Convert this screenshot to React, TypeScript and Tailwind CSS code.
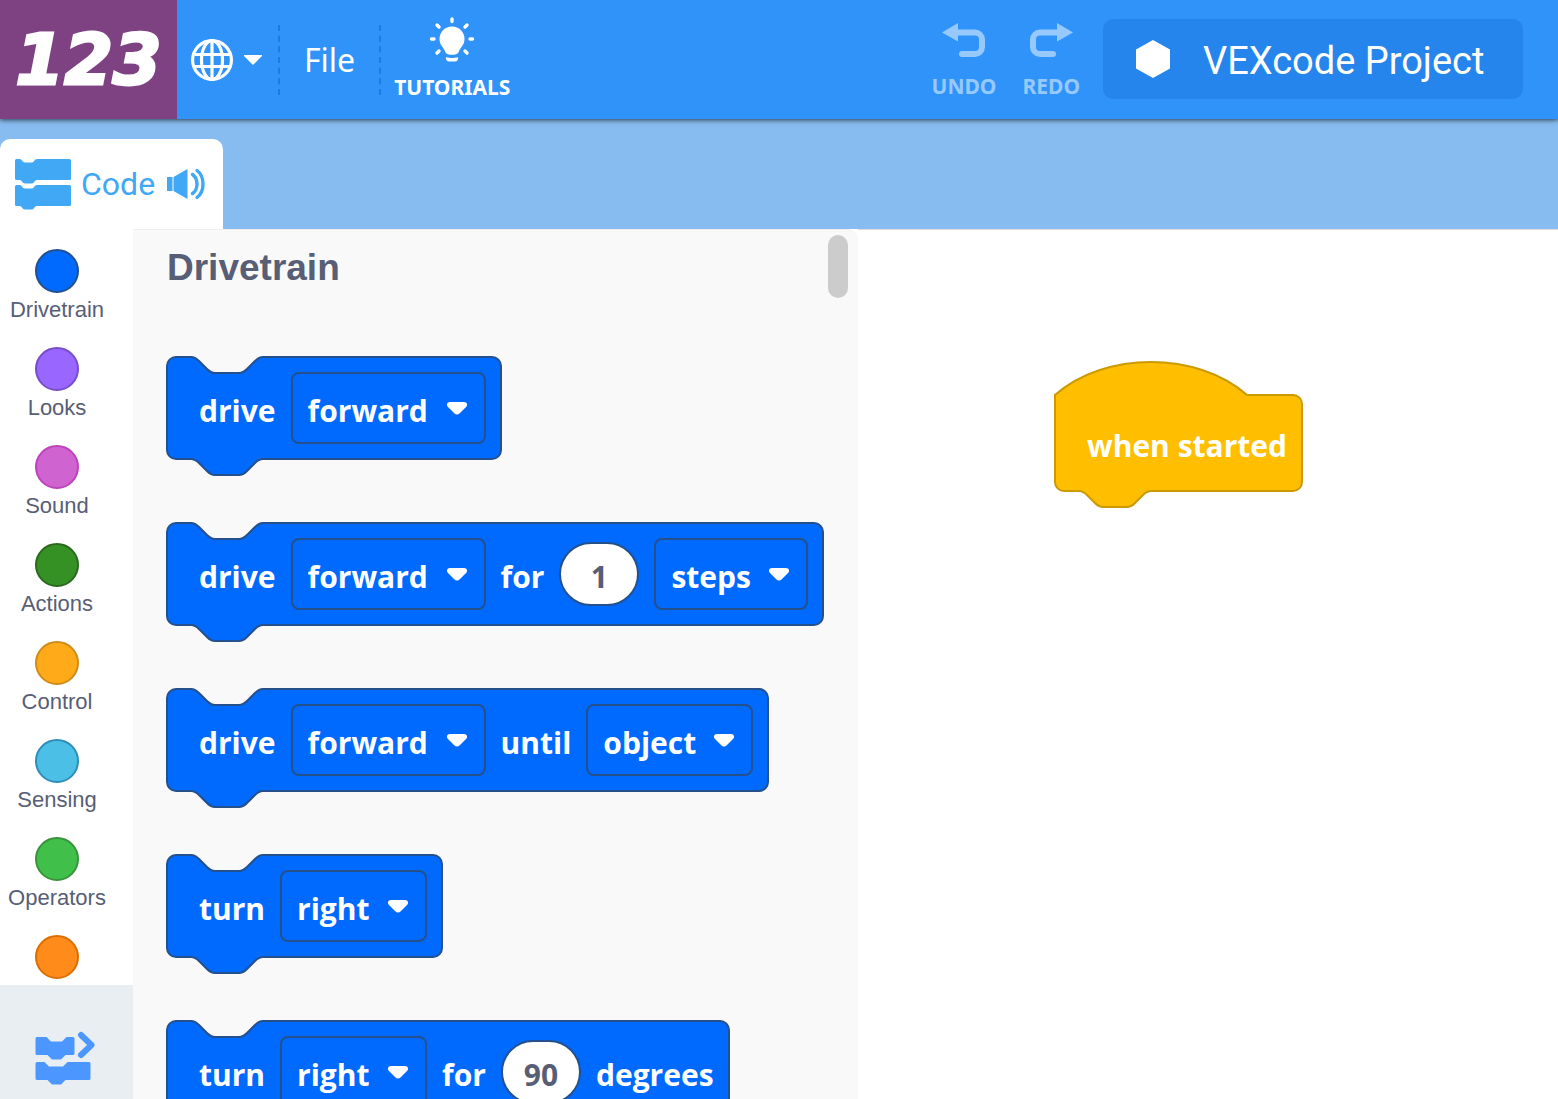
import { useState } from "react";

interface Category {
  name: string;
  fill: string;
}

type Part =
  | { kind: "label"; text: string }
  | { kind: "menu"; text: string }
  | { kind: "number"; value: string };

const categories: Category[] = [
  { name: "Drivetrain", fill: "bg-[#006aff] border-[#24508c]" },
  { name: "Looks", fill: "bg-[#9966ff] border-[#774dcb]" },
  { name: "Sound", fill: "bg-[#cf63cf] border-[#bd42bd]" },
  { name: "Actions", fill: "bg-[#369125] border-[#29681d]" },
  { name: "Control", fill: "bg-[#ffab19] border-[#cf8b17]" },
  { name: "Sensing", fill: "bg-[#4cbfe6] border-[#2e8eb8]" },
  { name: "Operators", fill: "bg-[#40bf4a] border-[#389438]" },
  { name: "", fill: "bg-[#ff8c1a] border-[#db6e00]" },
];

const blocks: Part[][] = [
  [
    { kind: "label", text: "drive" },
    { kind: "menu", text: "forward" },
  ],
  [
    { kind: "label", text: "drive" },
    { kind: "menu", text: "forward" },
    { kind: "label", text: "for" },
    { kind: "number", value: "1" },
    { kind: "menu", text: "steps" },
  ],
  [
    { kind: "label", text: "drive" },
    { kind: "menu", text: "forward" },
    { kind: "label", text: "until" },
    { kind: "menu", text: "object" },
  ],
  [
    { kind: "label", text: "turn" },
    { kind: "menu", text: "right" },
  ],
  [
    { kind: "label", text: "turn" },
    { kind: "menu", text: "right" },
    { kind: "label", text: "for" },
    { kind: "number", value: "90" },
    { kind: "label", text: "degrees" },
  ],
];

const CONNECTOR = "M0 1c4 0 6 2 8 4l8 8c2 2 4 4 8 4h24c4 0 6-2 8-4l8-8c2-2 4-4 8-4";

// Bump that joins two blocks, used for the notch on top and the tab below
function Connector({ fill, stroke, className }: { fill: string; stroke: string; className: string }) {
  return (
    <svg className={`absolute left-[23px] ${className}`} width="72" height="18" viewBox="0 0 72 18">
      <path d={`${CONNECTOR}V0H0z`} fill={fill} />
      <path d={CONNECTOR} fill="none" stroke={stroke} strokeWidth="2" />
    </svg>
  );
}

function BlockPart({ part }: { part: Part }) {
  if (part.kind === "label") {
    return <span className="pt-1">{part.text}</span>;
  }

  if (part.kind === "number") {
    return (
      <input
        type="text"
        aria-label="Amount"
        defaultValue={part.value}
        className="h-16 w-20 rounded-[32px] border-2 border-[#24508c] bg-white pt-1 text-center text-[#575e75]"
      />
    );
  }

  return (
    <div className="relative">
      <select
        aria-label={part.text}
        className="block h-[72px] appearance-none rounded-lg border-2 border-[#24508c] bg-transparent pt-1 pr-[55px] pl-[15px]"
      >
        <option>{part.text}</option>
      </select>
      <svg
        className="pointer-events-none absolute top-[30px] right-[18px]"
        width="22"
        height="14"
        viewBox="0 0 22 14"
      >
        <path d="M4 0h14c3 0 4 3 2 5l-6 6c-2 2-4 2-6 0L2 5C0 3 1 0 4 0z" fill="#fff" />
      </svg>
    </div>
  );
}

function Block({ parts }: { parts: Part[] }) {
  return (
    <div className="relative flex h-[104px] w-fit shrink-0 items-center gap-[15px] rounded-[10px] border-2 border-[#24508c] bg-[#006aff] pr-[14px] pl-[31px] font-['Open_Sans',sans-serif] text-[30px] font-bold whitespace-nowrap text-white">
      <Connector fill="#f9f9f9" stroke="#24508c" className="-top-[2px]" />
      <Connector fill="#006aff" stroke="#24508c" className="-bottom-[18px]" />
      {parts.map((part, i) => (
        <BlockPart key={i} part={part} />
      ))}
    </div>
  );
}

function HatBlock() {
  return (
    <div className="relative flex h-[98px] w-fit items-center rounded-[10px] rounded-tl-none border-2 border-[#cc9900] bg-[#ffbf00] pr-[14px] pl-[31px] font-['Open_Sans',sans-serif] text-[30px] font-bold whitespace-nowrap text-white">
      <svg className="absolute -top-[35px] -left-[2px]" width="196" height="36" viewBox="0 0 196 36">
        <path d="M1 34C51-10 143-10 193 34l1 2H2v-1z" fill="#ffbf00" />
        <path d="M1 36v-2C51-10 143-10 193 34h3" fill="none" stroke="#cc9900" strokeWidth="2" />
      </svg>
      <Connector fill="#ffbf00" stroke="#cc9900" className="-bottom-[18px]" />
      <span className="pt-1">when started</span>
    </div>
  );
}

function GlobeIcon() {
  return (
    <svg width="42" height="42" viewBox="0 0 42 42" fill="none" stroke="#fff" strokeWidth="3.2">
      <circle cx="21" cy="21" r="19.4" />
      <ellipse cx="21" cy="21" rx="10.5" ry="19.4" />
      <path d="M21 1v40M4 15.500h34M4 27.500h34" />
    </svg>
  );
}

function BulbIcon() {
  return (
    <svg width="46" height="46" viewBox="0 0 46 46" fill="#fff">
      <path d="M23 9.500c-7 0-12.500 5.500-12.500 12.200 0 6 3.500 8.300 5 11.300.8 1.600.6 4.800 7.500 4.800s6.700-3.200 7.500-4.800c1.500-3 5-5.300 5-11.300C35.500 15 30 9.500 23 9.500z" />
      <path d="M17.500 40.200c3 1.100 8 1.100 11 0 .8 0 1 .8.500 1.800-.7 1.800-1.500 2.500-3 2.500h-6c-1.500 0-2.300-.7-3-2.500-.5-1-.3-1.800.5-1.800z" />
      <path
        d="M23 2v2.500M8 8l2 2M38 8l-2 2M2.500 22H5M41 22h2.500M8 36l2-2M38 36l-2-2"
        stroke="#fff"
        strokeWidth="3.4"
        strokeLinecap="round"
      />
    </svg>
  );
}

function UndoIcon({ flipped }: { flipped?: boolean }) {
  return (
    <svg width="44" height="36" viewBox="0 0 44 36" className={flipped ? "-scale-x-100" : ""}>
      <path d="M0 9.500L16 0v18.500z" fill="#fff" />
      <path
        d="M16 9.500H33a7 7 0 0 1 7 7V24a7 7 0 0 1-7 7H20"
        fill="none"
        stroke="#fff"
        strokeWidth="6"
        strokeLinecap="round"
      />
    </svg>
  );
}

function CodeIcon() {
  const piece =
    "M1.500 0H5c1.500 0 2.500 3.500 5 3.500h7C19 3.500 19.500 0 22 0h32.500Q56 0 56 1.500v18Q56 21 54.500 21H22c-2.500 0-3 3.500-5 3.500h-7C7.500 24.500 6.500 21 5 21H1.500Q0 21 0 19.500v-18Q0 0 1.500 0z";
  return (
    <svg width="56" height="51" viewBox="0 0 56 51" fill="#41a8f5">
      <path d={piece} />
      <path d={piece} transform="translate(0 26)" />
    </svg>
  );
}

function SpeakerIcon() {
  return (
    <svg width="38" height="32" viewBox="0 0 38 32" fill="#41a8f5">
      <path d="M0 9h5.500v14H0zM6.500 9L20.500 1v30L6.500 23z" />
      <path
        d="M25.500 6.500c6 4 6 15 0 19M30 2.500c8 6 8 21 0 27"
        fill="none"
        stroke="#41a8f5"
        strokeWidth="3.4"
        strokeLinecap="round"
      />
    </svg>
  );
}

function ToolboxIcon() {
  return (
    <svg width="60" height="54" viewBox="0 0 60 54" fill="#4c97ff">
      <path d="M2 6h9.500l4.500 4.500h11L31.500 6H38q1.500 0 1.500 1.500v15q0 1.500-1.500 1.500h-7.500L26 28.500h-9L12.500 24H2q-1.500 0-1.500-1.500v-15Q.5 6 2 6z" />
      <path d="M2 31h7.500l4.500 4.500h14l4.500-4.500H54q1.500 0 1.500 1.500v15q0 1.500-1.500 1.500H30.500L26 53.500h-9L12.500 49H2q-1.500 0-1.500-1.500v-15Q.5 31 2 31z" />
      <path
        d="M46 4L56.500 14 46 24"
        fill="none"
        stroke="#4c97ff"
        strokeWidth="6"
        strokeLinecap="round"
        strokeLinejoin="round"
      />
    </svg>
  );
}

export default function App() {
  const [selected, setSelected] = useState("Drivetrain");

  return (
    <div className="flex h-screen flex-col overflow-hidden bg-white">
      {/* TOOLBAR */}
      <header className="relative z-10 flex h-[119px] shrink-0 items-center bg-[#2f93f9] text-white shadow-[0_1px_5px_rgba(0,0,0,0.7)]">
        <div className="flex h-full w-[177px] shrink-0 items-center justify-center bg-[#7e4283] font-['DejaVu_Sans',sans-serif] text-[70px] leading-none font-bold italic [-webkit-text-stroke:3px_white]">
          123
        </div>

        <button aria-label="Language" className="flex items-center gap-[11px] pr-4 pl-[14px]">
          <GlobeIcon />
          <svg width="18" height="10" viewBox="0 0 18 10">
            <path d="M0 0h18v1L9 10 0 1z" fill="#fff" />
          </svg>
        </button>
        <button className="h-[70px] border-x-2 border-dashed border-[#1a7ae6] px-6 font-['Noto_Sans',sans-serif] text-[32px]">
          File
        </button>

        <button className="ml-[13px] flex flex-col items-center gap-2 font-['Noto_Sans',sans-serif] text-[21px] leading-8 font-bold">
          <BulbIcon />
          TUTORIALS
        </button>

        <div className="ml-auto flex items-center pr-[35px] pb-px">
          <button className="flex flex-col items-center gap-[11px] pt-[6px] font-['Noto_Sans',sans-serif] text-[21px] leading-8 font-bold opacity-50">
            <UndoIcon />
            UNDO
          </button>
          <button className="ml-[26px] flex flex-col items-center gap-[11px] pt-[6px] font-['Noto_Sans',sans-serif] text-[21px] leading-8 font-bold opacity-50">
            <UndoIcon flipped />
            REDO
          </button>
          <button className="ml-[23px] flex h-20 w-[420px] items-center rounded-[10px] bg-[#2585ec] pl-[33px] font-['Roboto',sans-serif] text-[38px]">
            <svg width="34" height="38" viewBox="0 0 34 38">
              <path d="M17 0l17 9.500v19L17 38 0 28.500v-19z" fill="#fff" />
            </svg>
            <span className="ml-[33px] pt-1">VEXcode Project</span>
          </button>
        </div>
      </header>

      {/* TABS */}
      <div className="flex h-[110px] shrink-0 items-end bg-[#87bcf0]">
        <button className="flex h-[90px] w-[223px] items-center rounded-t-[10px] bg-white pl-[15px] font-['Roboto',sans-serif] text-[32px] text-[#41a8f5]">
          <CodeIcon />
          <span className="ml-[10px]">Code</span>
          <span className="ml-3">
            <SpeakerIcon />
          </span>
        </button>
      </div>

      <div className="flex min-h-0 flex-1">
        {/* CATEGORIES */}
        <nav className="flex w-[133px] shrink-0 flex-col">
          <div className="min-h-0 flex-1 overflow-hidden pt-5">
            {categories.map((category, i) => (
              <button
                key={i}
                onClick={() => setSelected(category.name)}
                className="flex h-[98px] w-[114px] flex-col items-center gap-[5px] font-['Liberation_Sans',sans-serif] text-[22px] leading-6 text-[#575e75]"
              >
                <span className={`size-11 shrink-0 rounded-full border-2 ${category.fill}`} />
                {category.name}
              </button>
            ))}
          </div>
          <button
            aria-label="Toggle toolbox"
            className="flex h-[114px] shrink-0 items-end bg-[#e9eef2] pb-[14px] pl-[35px]"
          >
            <ToolboxIcon />
          </button>
        </nav>

        {/* PALETTE */}
        <section className="flex w-[725px] shrink-0 overflow-hidden rounded-tr-[12px] border-t border-[#eeeeee] bg-[#f9f9f9]">
          <div className="flex w-[695px] shrink-0 flex-col overflow-hidden pt-[14px] pl-[33px]">
            <h2 className="mb-16 shrink-0 pl-px font-['Liberation_Sans',sans-serif] text-[37px] leading-[48px] font-bold text-[#575e75]">
              {selected}
            </h2>
            <div className="flex flex-col gap-[62px]">
              {blocks.map((parts, i) => (
                <Block key={i} parts={parts} />
              ))}
            </div>
          </div>
          <div className="mt-[5px] h-[63px] w-5 rounded-full bg-[#cccccc]" />
        </section>

        {/* WORKSPACE */}
        <main className="min-w-0 flex-1 border-t border-[#dddddd] pt-[164px] pl-[196px]">
          <HatBlock />
        </main>
      </div>
    </div>
  );
}
